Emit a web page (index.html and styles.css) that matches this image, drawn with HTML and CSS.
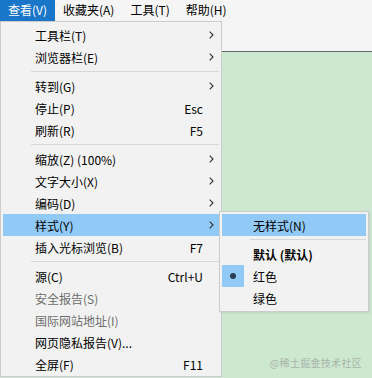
FILE: index.html
```html
<!DOCTYPE html>
<html lang="zh-CN">
<head>
  <meta charset="UTF-8">
  <title>查看菜单</title>
  <link rel="stylesheet" href="styles.css">
</head>
<body>
  <div class="menubar">
    <div class="menubar-item active">查看(V)</div>
    <div class="menubar-item">收藏夹(A)</div>
    <div class="menubar-item">工具(T)</div>
    <div class="menubar-item">帮助(H)</div>
  </div>
  <div class="toolbar"></div>
  <div class="content">
    <div class="watermark">@稀土掘金技术社区</div>
  </div>

  <div class="menu dropdown">
    <div class="item"><span class="label">工具栏(T)</span><span class="key"></span><span class="arrow"><svg width="5" height="8" viewBox="0 0 5 8"><path d="M0.7 0.7 L4 4 L0.7 7.3" fill="none" stroke="#333" stroke-width="1.1"/></svg></span></div>
    <div class="item"><span class="label">浏览器栏(E)</span><span class="key"></span><span class="arrow"><svg width="5" height="8" viewBox="0 0 5 8"><path d="M0.7 0.7 L4 4 L0.7 7.3" fill="none" stroke="#333" stroke-width="1.1"/></svg></span></div>
    <div class="sep"></div>
    <div class="item"><span class="label">转到(G)</span><span class="key"></span><span class="arrow"><svg width="5" height="8" viewBox="0 0 5 8"><path d="M0.7 0.7 L4 4 L0.7 7.3" fill="none" stroke="#333" stroke-width="1.1"/></svg></span></div>
    <div class="item"><span class="label">停止(P)</span><span class="key">Esc</span><span class="arrow"></span></div>
    <div class="item"><span class="label">刷新(R)</span><span class="key">F5</span><span class="arrow"></span></div>
    <div class="sep"></div>
    <div class="item"><span class="label">缩放(Z) (100%)</span><span class="key"></span><span class="arrow"><svg width="5" height="8" viewBox="0 0 5 8"><path d="M0.7 0.7 L4 4 L0.7 7.3" fill="none" stroke="#333" stroke-width="1.1"/></svg></span></div>
    <div class="item"><span class="label">文字大小(X)</span><span class="key"></span><span class="arrow"><svg width="5" height="8" viewBox="0 0 5 8"><path d="M0.7 0.7 L4 4 L0.7 7.3" fill="none" stroke="#333" stroke-width="1.1"/></svg></span></div>
    <div class="item"><span class="label">编码(D)</span><span class="key"></span><span class="arrow"><svg width="5" height="8" viewBox="0 0 5 8"><path d="M0.7 0.7 L4 4 L0.7 7.3" fill="none" stroke="#333" stroke-width="1.1"/></svg></span></div>
    <div class="item hover"><span class="label">样式(Y)</span><span class="key"></span><span class="arrow"><svg width="5" height="8" viewBox="0 0 5 8"><path d="M0.7 0.7 L4 4 L0.7 7.3" fill="none" stroke="#333" stroke-width="1.1"/></svg></span></div>
    <div class="item"><span class="label">插入光标浏览(B)</span><span class="key">F7</span><span class="arrow"></span></div>
    <div class="sep"></div>
    <div class="item"><span class="label">源(C)</span><span class="key">Ctrl+U</span><span class="arrow"></span></div>
    <div class="item disabled"><span class="label">安全报告(S)</span><span class="key"></span><span class="arrow"></span></div>
    <div class="item disabled"><span class="label">国际网站地址(I)</span><span class="key"></span><span class="arrow"></span></div>
    <div class="item"><span class="label">网页隐私报告(V)...</span><span class="key"></span><span class="arrow"></span></div>
    <div class="item"><span class="label">全屏(F)</span><span class="key">F11</span><span class="arrow"></span></div>
  </div>

  <div class="menu submenu">
    <div class="item hover"><span class="label">无样式(N)</span></div>
    <div class="sep"></div>
    <div class="item bold"><span class="label">默认 (默认)</span></div>
    <div class="item"><span class="check"><i class="dot"></i></span><span class="label">红色</span></div>
    <div class="item"><span class="label">绿色</span></div>
  </div>
</body>
</html>
```

FILE: styles.css
```css
body {
  margin: 0;
  width: 372px;
  height: 378px;
  overflow: hidden;
  background: #cce8cf;
  font-family: "Noto Sans CJK SC", "Noto Sans", sans-serif;
  font-size: 12px;
  color: #000;
  position: relative;
}
.menubar {
  display: flex;
  height: 21px;
  background: #f5f5f5;
}
.menubar-item {
  height: 21px;
  line-height: 20px;
  padding: 0 8px 0 8px;
}
.menubar-item.active {
  background: #1a76c8;
  color: #fff;
}
.toolbar {
  height: 30px;
  background: #f5f5f5;
  border-bottom: 1px solid #666;
}
.content {
  height: 326px;
  position: relative;
}
.watermark {
  position: absolute;
  right: 10px;
  bottom: 8px;
  font-size: 10px;
  color: #a9b4aa;
  letter-spacing: 0.3px;
}
.menu {
  position: absolute;
  background: #f2f2f2;
  border: 1px solid #cccccc;
  padding: 2px;
  box-sizing: border-box;
}
.dropdown {
  left: 0;
  top: 21px;
  width: 222px;
  height: 356px;
}
.submenu {
  left: 219px;
  top: 211px;
  width: 150px;
  box-shadow: 1px 1px 2px rgba(0,0,0,0.08);
}
.item {
  display: flex;
  align-items: center;
  height: 22px;
  padding-left: 32px;
}
.submenu .item {
  padding-left: 31px;
  position: relative;
}
.item .label {
  flex: 1;
  white-space: nowrap;
}
.item .key {
  text-align: right;
}
.item .arrow {
  width: 15px;
  display: flex;
  justify-content: center;
  padding-left: 1px;
}
.item.hover {
  background: #91c9f7;
}
.item.disabled {
  color: #6d6d6d;
}
.item.bold {
  font-weight: bold;
}
.sep {
  height: 7px;
  display: flex;
  align-items: center;
  padding-left: 28px;
}
.sep::after {
  content: "";
  flex: 1;
  height: 1px;
  background: #d7d7d7;
}
.check {
  position: absolute;
  left: 0;
  top: 0;
  width: 22px;
  height: 22px;
  background: #91c9f7;
  display: flex;
  align-items: center;
  justify-content: center;
}
.dot {
  width: 6px;
  height: 6px;
  border-radius: 50%;
  background: #2b3c55;
}
```
